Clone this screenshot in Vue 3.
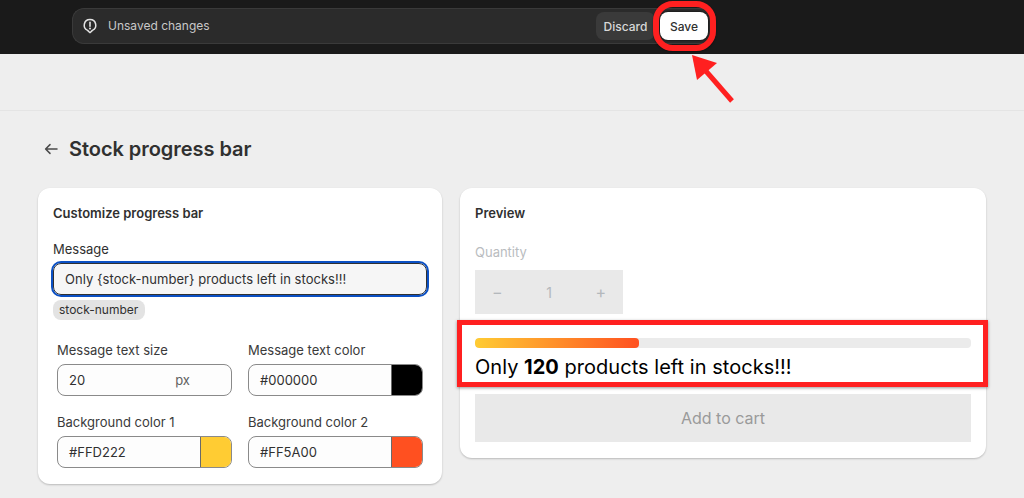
<template>
  <div class="page">
    <header class="topbar">
      <div class="save-bar">
        <svg class="alert-icon" viewBox="0 0 16 16" width="16" height="16" fill="none">
          <path d="M8 1.500a5.700 5.700 0 0 0-2.400 10.900l1.900 1.800c.3.300.7.300 1 0l1.900-1.800A5.700 5.700 0 0 0 8 1.500Z" stroke="#e3e3e3" stroke-width="1.500" stroke-linejoin="round" />
          <path d="M8 4.400v3.800" stroke="#e3e3e3" stroke-width="1.600" stroke-linecap="round" />
          <circle cx="8" cy="10.500" r="1" fill="#e3e3e3" />
        </svg>
        <span class="unsaved">Unsaved changes</span>
        <div class="bar-actions">
          <button type="button" class="discard">Discard</button>
          <button type="button" class="save">Save</button>
        </div>
      </div>
    </header>

    <div class="strip"></div>

    <main class="content">
      <div class="title-row">
        <svg viewBox="0 0 16 16" width="16" height="16" fill="none">
          <path d="M14 8H2.800M7 3.600 2.600 8 7 12.400" stroke="#4a4a4a" stroke-width="1.500" stroke-linecap="round" stroke-linejoin="round" />
        </svg>
        <h1>Stock progress bar</h1>
      </div>

      <div class="columns">
        <section class="card settings">
          <h2>Customize progress bar</h2>
          <label class="msg-label">Message</label>
          <div class="msg-input">Only {stock-number} products left in stocks!!!</div>
          <span class="chip">stock-number</span>

          <div class="fields">
            <div v-for="f in fields" :key="f.label" class="field">
              <label>{{ f.label }}</label>
              <div class="input">
                <span class="value">{{ f.value }}</span>
                <span v-if="f.suffix" class="suffix">{{ f.suffix }}</span>
                <span v-if="f.color" class="swatch" :style="{ background: f.color }"></span>
              </div>
            </div>
          </div>
        </section>

        <section class="card preview">
          <h2>Preview</h2>
          <div class="qty-label">Quantity</div>
          <div class="qty">
            <span>−</span>
            <span class="qty-num">1</span>
            <span>+</span>
          </div>
          <div class="progress-wrap">
            <div class="track"><div class="fill" :style="{ width: progress + '%' }"></div></div>
            <p class="stock-msg">Only <b>120</b> products left in stocks!!!</p>
            <div class="mark-rect"></div>
          </div>
          <div class="add-cart">Add to cart</div>
        </section>
      </div>
    </main>

    <div class="mark-ring"></div>
    <svg class="mark-arrow" viewBox="0 0 60 60" width="60" height="60" fill="none">
      <path d="M50 53 23 22" stroke="#ff2020" stroke-width="5" />
      <path d="M10 7 35 15 15 32Z" fill="#ff2020" />
    </svg>
  </div>
</template>

<script setup>
const progress = 33

const fields = [
  { label: 'Message text size', value: '20', suffix: 'px' },
  { label: 'Message text color', value: '#000000', color: '#000000' },
  { label: 'Background color 1', value: '#FFD222', color: '#FFCC33' },
  { label: 'Background color 2', value: '#FF5A00', color: '#FF5020' }
]
</script>

<style>
html, body {
  margin: 0;
  background: #eeeeee;
}
</style>

<style scoped>
.page {
  position: relative;
  height: 498px;
  overflow: hidden;
  background: #eeeeee;
  color: #303030;
  font-family: Inter, "Liberation Sans", sans-serif;
  font-size: 13px;
}

.topbar {
  height: 54px;
  padding: 8px 0 0 72px;
  box-sizing: border-box;
  background: #1a1a1a;
}

.save-bar {
  display: flex;
  align-items: center;
  box-sizing: border-box;
  width: 644px;
  height: 36px;
  padding: 0 8px 0 9px;
  border: 1px solid #3a3a3a;
  border-right: 0;
  border-radius: 12px;
  background: #2b2b2b;
}

.alert-icon {
  margin-right: 10px;
}

.unsaved {
  position: relative;
  top: -1px;
  color: #c8c8c8;
  font-size: 12px;
}

.bar-actions {
  display: flex;
  gap: 5px;
  margin-left: auto;
  align-items: center;
}

.discard, .save {
  height: 28px;
  padding: 0;
  border: 0;
  border-radius: 8px;
  font-family: inherit;
  font-size: 12px;
  font-weight: 500;
}

.discard {
  width: 59px;
  background: #3a3a3a;
  color: #d8d8d8;
}

.save {
  width: 48px;
  background: #ffffff;
  color: #303030;
  box-shadow: 0 0 2px #000;
}

.strip {
  height: 56px;
  border-bottom: 1px solid #e4e4e4;
}

.content {
  padding: 0 38px;
}

.title-row {
  display: flex;
  align-items: center;
  gap: 10px;
  height: 75px;
  padding: 0 0 2px 5px;
}

h1 {
  margin: 0;
  font-size: 20px;
  font-weight: 600;
  letter-spacing: -.05px;
}

.columns {
  display: flex;
  align-items: flex-start;
  gap: 18px;
}

.card {
  box-sizing: border-box;
  border-radius: 12px;
  background: #ffffff;
  box-shadow: 0 1px 2px rgba(0, 0, 0, .22);
}

h2 {
  margin: 0;
  font-size: 13px;
  font-weight: 600;
  line-height: 16px;
}

.settings {
  width: 404px;
  height: 296px;
  padding: 17px 15px;
}

.msg-label {
  display: block;
  margin-top: 20px;
  line-height: 16px;
}

.msg-input {
  box-sizing: border-box;
  height: 32px;
  margin-top: 6px;
  padding: 0 11px;
  border: 1px solid #303030;
  border-radius: 8px;
  outline: 2px solid #0b50c4;
  outline-offset: 0;
  background: #f6f6f6;
  line-height: 30px;
  letter-spacing: .04px;
}

.chip {
  display: block;
  width: fit-content;
  height: 20px;
  margin-top: 5px;
  padding: 0 7px 0 6px;
  border-radius: 8px;
  background: #e3e3e3;
  font-size: 12px;
  line-height: 20px;
}

.fields {
  display: grid;
  grid-template-columns: 175px 175px;
  column-gap: 16px;
  row-gap: 18px;
  margin: 22px 4px 0;
}

.field label {
  display: block;
  margin-bottom: 6px;
  line-height: 16px;
  color: #3a3a3a;
}

.input {
  display: flex;
  align-items: center;
  box-sizing: border-box;
  height: 32px;
  padding-left: 11px;
  border: 1px solid #8a8a8a;
  border-radius: 8px;
  background: #fdfdfd;
  overflow: hidden;
}

.suffix {
  margin-left: 90px;
  color: #616161;
}

.swatch {
  box-sizing: border-box;
  margin-left: auto;
  width: 31px;
  height: 100%;
  border-left: 1px solid #6a6a6a;
}

.preview {
  width: 526px;
  height: 270px;
  padding: 17px 15px;
}

.qty-label {
  margin-top: 22px;
  color: #b9bcc0;
  line-height: 18px;
}

.qty {
  display: flex;
  align-items: center;
  justify-content: space-between;
  width: 148px;
  height: 44px;
  margin-top: 9px;
  padding: 0 17px;
  box-sizing: border-box;
  background: #e9e9e9;
  color: #b4b8bc;
  font-size: 16px;
}

.qty-num {
  font-size: 14px;
}

.progress-wrap {
  position: relative;
  margin-top: 24px;
}

.track {
  height: 10px;
  border-radius: 4px;
  background: #ebebeb;
  overflow: hidden;
}

.fill {
  height: 100%;
  border-radius: 4px;
  background: linear-gradient(90deg, #ffcc33, #ff5020);
}

.stock-msg {
  margin: 7px 0 0;
  color: #000000;
  font-size: 20px;
  line-height: 24px;
  letter-spacing: .03px;
}

.stock-msg b {
  font-weight: 700;
}

.mark-rect {
  position: absolute;
  left: -18px;
  top: -18px;
  right: -17px;
  bottom: -8px;
  border: 5px solid #ff2020;
  box-shadow: 0 1px 3px rgba(0, 0, 0, .4);
}

.add-cart {
  height: 48px;
  margin-top: 15px;
  background: #e9e9e9;
  color: #9a9a9a;
  font-size: 16px;
  line-height: 48px;
  text-align: center;
}

.mark-ring {
  position: absolute;
  left: 653px;
  top: 1px;
  width: 63px;
  height: 50px;
  box-sizing: border-box;
  border: 6px solid #ff2020;
  border-radius: 20px;
  box-shadow: 0 1px 2px rgba(0, 0, 0, .4);
}

.mark-arrow {
  position: absolute;
  left: 682px;
  top: 48px;
  overflow: visible;
}
</style>
